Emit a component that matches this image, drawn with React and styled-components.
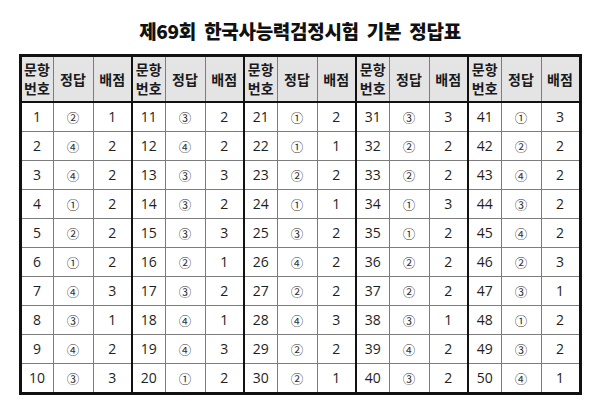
import React from "react";
import styled, { createGlobalStyle } from "styled-components";

const GlobalStyle = createGlobalStyle`
  html, body {
    margin: 0;
    padding: 0;
    background: #ffffff;
  }
  body {
    font-family: "Noto Sans CJK KR", "Noto Sans", sans-serif;
    color: #1a1a1a;
  }
`;

const Page = styled.div`
  width: 600px;
  height: 415px;
  display: flex;
  flex-direction: column;
  align-items: center;
  padding-top: 17px;
  box-sizing: border-box;
`;

const Title = styled.h1`
  margin: 0 0 9px;
  font-size: 19px;
  line-height: 28px;
  font-weight: 900;
  letter-spacing: -0.3px;
  color: #111;
  white-space: pre;
`;

const Table = styled.table`
  width: 558px;
  table-layout: fixed;
  border-collapse: collapse;
  border: 3px solid #111;
`;

const HeadCell = styled.th`
  height: 44px;
  padding: 0;
  background: #e4e4e4;
  font-size: 14px;
  line-height: 19px;
  font-weight: 700;
  color: #1a1a1a;
  text-align: center;
  border: 1px solid #7c7c7c;
  border-bottom: 2px solid #111;
  border-left: ${({ $groupStart }) => ($groupStart ? "2px solid #111" : "1px solid #7c7c7c")};
`;

const Cell = styled.td`
  height: 28px;
  padding: 0;
  line-height: 18px;
  text-align: center;
  font-family: "Open Sans", "Noto Sans CJK KR", sans-serif;
  font-size: ${({ $kind }) => ($kind === "answer" ? "12.5px" : "14px")};
  color: ${({ $kind }) => ($kind === "answer" ? "#333" : "#1e1e1e")};
  border: 1px solid #7c7c7c;
  border-left: ${({ $groupStart }) => ($groupStart ? "2px solid #111" : "1px solid #7c7c7c")};
`;

const Answer = styled.span`
  font-family: "Noto Sans CJK KR", sans-serif;
  position: relative;
  top: 1px;
`;

const circled = ["", "①", "②", "③", "④"];

// [answer, score] per question, 1..50
const answers = [
  [2, 1], [4, 2], [4, 2], [1, 2], [2, 2], [1, 2], [4, 3], [3, 1], [4, 2], [3, 3],
  [3, 2], [4, 2], [3, 3], [3, 2], [3, 3], [2, 1], [3, 2], [4, 1], [4, 3], [1, 2],
  [1, 2], [1, 1], [2, 2], [1, 1], [3, 2], [4, 2], [2, 2], [4, 3], [2, 2], [2, 1],
  [3, 3], [2, 2], [2, 2], [1, 3], [1, 2], [2, 2], [2, 2], [3, 1], [4, 2], [3, 2],
  [1, 3], [2, 2], [4, 2], [3, 2], [4, 2], [2, 3], [3, 1], [1, 2], [3, 2], [4, 1]
];

const groups = [0, 1, 2, 3, 4];

const App = () => {
  return (
    <>
      <GlobalStyle />
      <Page>
        <Title>{"제69회  한국사능력검정시험  기본  정답표"}</Title>
        <Table>
          <colgroup>
            {groups.map((g) => (
              <React.Fragment key={g}>
                <col style={{ width: "33px" }} />
                <col style={{ width: "40px" }} />
                <col style={{ width: "39px" }} />
              </React.Fragment>
            ))}
          </colgroup>
          <thead>
            <tr>
              {groups.map((g) => (
                <React.Fragment key={g}>
                  <HeadCell $groupStart={g > 0}>
                    문항
                    <br />
                    번호
                  </HeadCell>
                  <HeadCell>정답</HeadCell>
                  <HeadCell>배점</HeadCell>
                </React.Fragment>
              ))}
            </tr>
          </thead>
          <tbody>
            {Array.from({ length: 10 }, (_, r) => (
              <tr key={r}>
                {groups.map((g) => {
                  const n = g * 10 + r + 1;
                  const [a, s] = answers[n - 1];
                  return (
                    <React.Fragment key={g}>
                      <Cell $groupStart={g > 0}>{n}</Cell>
                      <Cell $kind="answer">
                        <Answer>{circled[a]}</Answer>
                      </Cell>
                      <Cell>{s}</Cell>
                    </React.Fragment>
                  );
                })}
              </tr>
            ))}
          </tbody>
        </Table>
      </Page>
    </>
  );
};

export default App;
